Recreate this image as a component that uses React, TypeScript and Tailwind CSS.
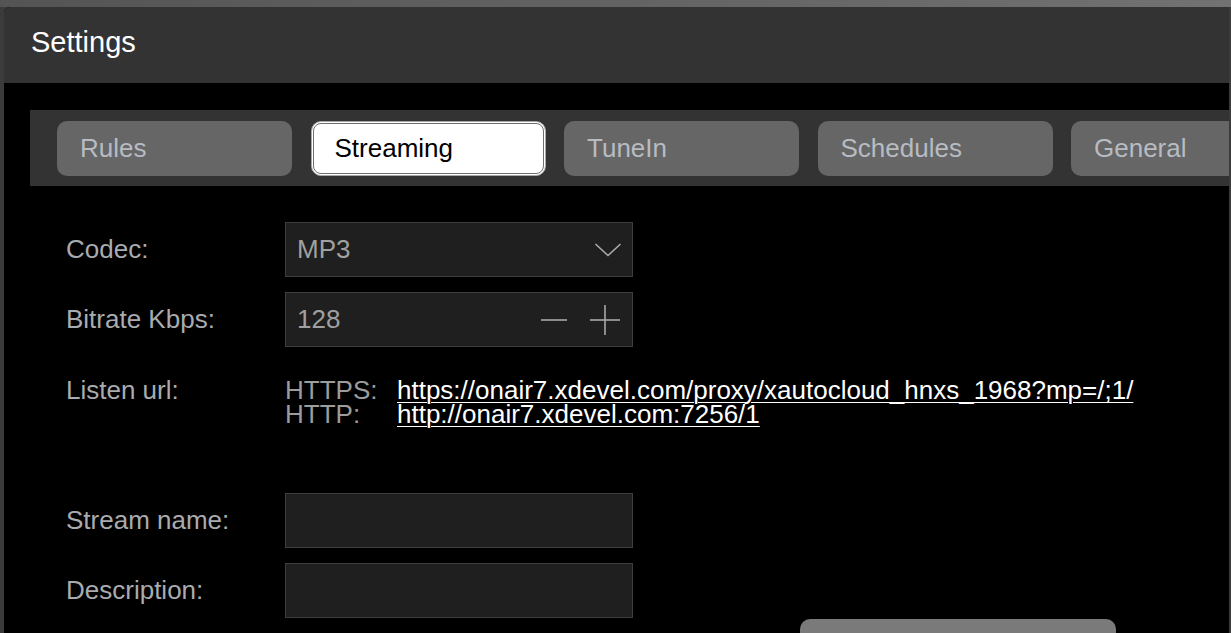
import React from "react";

const tabs = ["Rules", "Streaming", "TuneIn", "Schedules", "General"];

function Tab({ label, active }: { label: string; active?: boolean }) {
  if (active) {
    return (
      <div className="w-[235px] h-[55px] shrink-0 rounded-[10px] border border-[#a8a8a8] bg-white p-[1px]">
        <div className="h-full rounded-[8px] border border-[#6f6f6f] bg-white flex items-center pl-[21px] text-[26px] text-black leading-none">
          {label}
        </div>
      </div>
    );
  }
  return (
    <div className="w-[235px] h-[55px] shrink-0 rounded-[10px] bg-[#666666] flex items-center pl-[23px] text-[26px] text-[#b7bbc2] leading-none">
      {label}
    </div>
  );
}

export default function App() {
  return (
    <div className="w-[1231px] h-[633px] overflow-hidden bg-[#3b3b3b] flex flex-col font-['Liberation_Sans',Arial,sans-serif]">
      <div className="h-[7px] shrink-0 bg-linear-to-r from-[#545454] to-[#727272]" />
      <div className="flex-1 ml-[4px] mr-[2px] rounded-tl-[6px] overflow-hidden bg-black flex flex-col">
        <div className="h-[76px] shrink-0 bg-[#333333] flex items-center pl-[27px] pb-[5px] text-[29px] text-white leading-none">
          Settings
        </div>
        <div className="flex flex-col pt-[27px]">
          <div className="ml-[26px] h-[76px] bg-[#333333] flex items-center pl-[27px] gap-[18.5px] overflow-hidden">
            {tabs.map((t) => (
              <Tab key={t} label={t} active={t === "Streaming"} />
            ))}
          </div>

          <div className="pl-[62px] flex flex-col text-[26px]">
            <div className="mt-[36px] flex items-center">
              <div className="w-[219px] text-[#a9abae]">Codec:</div>
              <div className="w-[348px] h-[55px] bg-[#1f1f1f] border border-[#3d3d3d] flex items-center pl-[11px] pr-[10px] text-[#a0a0a0]">
                <span className="flex-1">MP3</span>
                <svg width="28" height="16" viewBox="0 0 28 16" fill="none">
                  <polyline points="1.5,2 14,13.5 26.5,2" stroke="#a8a8a8" strokeWidth="1.6" />
                </svg>
              </div>
            </div>

            <div className="mt-[15px] flex items-center">
              <div className="w-[219px] text-[#a9abae]">Bitrate Kbps:</div>
              <div className="w-[348px] h-[55px] bg-[#1f1f1f] border border-[#3d3d3d] flex items-center pl-[11px] pr-[12px] text-[#a0a0a0]">
                <span className="flex-1">128</span>
                <svg width="28" height="30" viewBox="0 0 28 30" fill="none" className="mr-[22px]">
                  <line x1="1" y1="15" x2="27" y2="15" stroke="#a8a8a8" strokeWidth="1.6" />
                </svg>
                <svg width="30" height="30" viewBox="0 0 30 30" fill="none">
                  <line x1="0" y1="15" x2="30" y2="15" stroke="#a8a8a8" strokeWidth="1.6" />
                  <line x1="15" y1="0" x2="15" y2="30" stroke="#a8a8a8" strokeWidth="1.6" />
                </svg>
              </div>
            </div>

            <div className="mt-[31px] flex items-start leading-[24px]">
              <div className="w-[219px] text-[#a9abae]">Listen url:</div>
              <div className="flex flex-col">
                <div className="flex">
                  <span className="w-[112px] text-[#9c9c9c]">HTTPS:</span>
                  <span className="text-white underline underline-offset-[3px] decoration-1">
                    https://onair7.xdevel.com/proxy/xautocloud_hnxs_1968?mp=/;1/
                  </span>
                </div>
                <div className="flex">
                  <span className="w-[112px] text-[#9c9c9c]">HTTP:</span>
                  <span className="text-white underline underline-offset-[3px] decoration-1">
                    http://onair7.xdevel.com:7256/1
                  </span>
                </div>
              </div>
            </div>

            <div className="mt-[67px] flex items-center">
              <div className="w-[219px] text-[#a9abae]">Stream name:</div>
              <div className="w-[348px] h-[55px] bg-[#1f1f1f] border border-[#3d3d3d]" />
            </div>

            <div className="mt-[15px] flex items-center">
              <div className="w-[219px] text-[#a9abae]">Description:</div>
              <div className="w-[348px] h-[55px] bg-[#1f1f1f] border border-[#3d3d3d]" />
            </div>

            <div className="mt-[1px] ml-[734px] w-[316px] h-[40px] shrink-0 rounded-[10px] bg-[#7a7a7a]" />
          </div>
        </div>
      </div>
    </div>
  );
}
